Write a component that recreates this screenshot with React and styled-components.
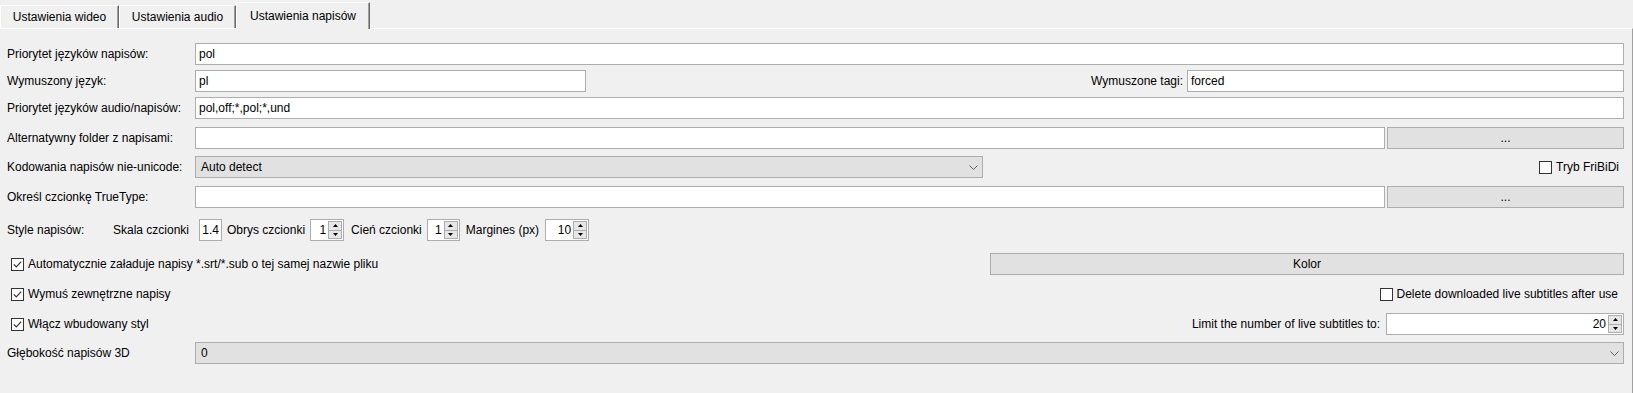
import React from 'react'
import styled, { createGlobalStyle } from 'styled-components'

const GlobalStyle = createGlobalStyle`
  html, body {
    margin: 0;
    padding: 0;
    background: #f0f0f0;
  }
  body {
    font-family: "Liberation Sans", Arial, sans-serif;
    font-size: 12px;
    color: #000;
  }
`

const Window = styled.div`
  width: 1633px;
  height: 393px;
  overflow: hidden;
`

const TabBar = styled.div`
  display: flex;
  align-items: flex-end;
  height: 28px;
`

const Tab = styled.div`
  position: relative;
  box-sizing: border-box;
  width: ${p => p.$w}px;
  height: ${p => (p.$active ? 27 : 23)}px;
  margin-bottom: ${p => (p.$active ? -1 : 0)}px;
  z-index: ${p => (p.$active ? 1 : 0)};
  display: flex;
  align-items: center;
  justify-content: center;
  background: #f0f0f0;
  border-top: 1px solid #fff;
  border-left: 1px solid #fff;
  border-right: 1px solid #696969;
  box-shadow: inset -1px 0 0 #a0a0a0;
  white-space: nowrap;
`

const Panel = styled.div`
  box-sizing: border-box;
  height: 365px;
  border-top: 1px solid #fff;
  border-right: 1px solid #a0a0a0;
  padding: 14px 8px 0 7px;
`

const Row = styled.div`
  display: flex;
  align-items: center;
  height: 22px;
  margin-top: ${p => p.$mt || 0}px;
`

const Label = styled.div`
  flex: none;
  white-space: nowrap;
  ${p => (p.$w ? `width: ${p.$w}px;` : '')}
  margin-left: ${p => p.$ml || 0}px;
  margin-right: ${p => p.$mr || 0}px;
`

const Spacer = styled.div`
  flex: 1;
`

const Field = styled.div`
  box-sizing: border-box;
  height: 22px;
  border: 1px solid #adadad;
  background: #fff;
  padding: 0 3px;
  display: flex;
  align-items: center;
  white-space: nowrap;
  ${p => (p.$w ? `width: ${p.$w}px; flex: none;` : 'flex: 1;')}
`

const Combo = styled(Field)`
  background: #e1e1e1;
  justify-content: space-between;
  padding: 0 4px 0 5px;
`

const Button = styled.div`
  box-sizing: border-box;
  height: 22px;
  border: 1px solid #adadad;
  background: #e1e1e1;
  display: flex;
  align-items: center;
  justify-content: center;
  margin-left: ${p => p.$ml || 0}px;
  ${p => (p.$w ? `width: ${p.$w}px; flex: none;` : 'flex: 1;')}
`

const NumBox = styled.div`
  box-sizing: border-box;
  width: ${p => p.$w}px;
  height: 22px;
  flex: none;
  margin-left: ${p => p.$ml || 0}px;
  border: 1px solid #adadad;
  background: #fff;
  display: flex;
  align-items: center;
  justify-content: flex-end;
  padding-right: 2px;
`

const SpinBox = styled.div`
  box-sizing: border-box;
  width: ${p => p.$w}px;
  height: 22px;
  flex: none;
  margin-left: ${p => p.$ml || 0}px;
  border: 1px solid #adadad;
  background: #fff;
  display: flex;
  align-items: stretch;
  padding: 1px;
`

const SpinValue = styled.div`
  flex: 1;
  display: flex;
  align-items: center;
  justify-content: flex-end;
  padding-right: 2px;
`

const Arrows = styled.div`
  width: 14px;
  display: flex;
  flex-direction: column;
`

const ArrowBtn = styled.div`
  flex: 1;
  box-sizing: border-box;
  background: #e6e6e6;
  border: 1px solid #adadad;
  margin-top: ${p => (p.$down ? -1 : 0)}px;
  display: flex;
  align-items: center;
  justify-content: center;
`

const CheckItem = styled.div`
  display: flex;
  align-items: center;
  gap: 3px;
  white-space: nowrap;
  margin-left: ${p => p.$ml || 0}px;
  margin-right: ${p => p.$mr || 0}px;
`

const Box = styled.div`
  box-sizing: border-box;
  width: 13px;
  height: 13px;
  border: 1px solid #333;
  background: #fff;
  display: flex;
  align-items: center;
  justify-content: center;
  margin-right: 1px;
`

function Chevron() {
  return (
    <svg width="9" height="5" viewBox="0 0 9 5">
      <polyline points="0.5,0.5 4.5,4.5 8.5,0.5" fill="none" stroke="#606060" strokeWidth="1" />
    </svg>
  )
}

function Check({ checked, children, ml, mr }) {
  return (
    <CheckItem $ml={ml} $mr={mr}>
      <Box>
        {checked && (
          <svg width="9" height="9" viewBox="0 0 9 9">
            <polyline points="0.8,4.3 3.3,6.9 8.2,1.6" fill="none" stroke="#333" strokeWidth="1.2" />
          </svg>
        )}
      </Box>
      {children}
    </CheckItem>
  )
}

function Spinner({ value, w, ml }) {
  return (
    <SpinBox $w={w} $ml={ml}>
      <SpinValue>{value}</SpinValue>
      <Arrows>
        <ArrowBtn>
          <svg width="5" height="3" viewBox="0 0 5 3"><polygon points="2.5,0 5,3 0,3" fill="#000" /></svg>
        </ArrowBtn>
        <ArrowBtn $down>
          <svg width="5" height="3" viewBox="0 0 5 3"><polygon points="0,0 5,0 2.5,3" fill="#000" /></svg>
        </ArrowBtn>
      </Arrows>
    </SpinBox>
  )
}

export default function App() {
  return (
    <Window>
      <GlobalStyle />
      <TabBar>
        <Tab $w={119}>Ustawienia wideo</Tab>
        <Tab $w={117}>Ustawienia audio</Tab>
        <Tab $w={134} $active>Ustawienia napisów</Tab>
      </TabBar>
      <Panel>
        <Row>
          <Label $w={188}>Priorytet języków napisów:</Label>
          <Field>pol</Field>
        </Row>
        <Row $mt={5}>
          <Label $w={188}>Wymuszony język:</Label>
          <Field $w={391}>pl</Field>
          <Spacer />
          <Label $mr={4}>Wymuszone tagi:</Label>
          <Field $w={437}>forced</Field>
        </Row>
        <Row $mt={5}>
          <Label $w={188}>Priorytet języków audio/napisów:</Label>
          <Field>pol,off;*,pol;*,und</Field>
        </Row>
        <Row $mt={8}>
          <Label $w={188}>Alternatywny folder z napisami:</Label>
          <Field />
          <Button $w={237} $ml={2}>...</Button>
        </Row>
        <Row $mt={7}>
          <Label $w={188}>Kodowania napisów nie-unicode:</Label>
          <Combo $w={788}>
            Auto detect
            <Chevron />
          </Combo>
          <Spacer />
          <Check mr={5}>Tryb FriBiDi</Check>
        </Row>
        <Row $mt={8}>
          <Label $w={188}>Określ czcionkę TrueType:</Label>
          <Field />
          <Button $w={237} $ml={2}>...</Button>
        </Row>
        <Row $mt={11}>
          <Label $w={106}>Style napisów:</Label>
          <Label>Skala czcionki</Label>
          <NumBox $w={23} $ml={10}>1.4</NumBox>
          <Label $ml={5}>Obrys czcionki</Label>
          <Spinner value="1" w={34} ml={5} />
          <Label $ml={7}>Cień czcionki</Label>
          <Spinner value="1" w={33} ml={5} />
          <Label $ml={6}>Margines (px)</Label>
          <Spinner value="10" w={44} ml={6} />
        </Row>
        <Row $mt={12}>
          <Check checked ml={4}>Automatycznie załaduje napisy *.srt/*.sub o tej samej nazwie pliku</Check>
          <Spacer />
          <Button $w={634}>Kolor</Button>
        </Row>
        <Row $mt={8}>
          <Check checked ml={4}>Wymuś zewnętrzne napisy</Check>
          <Spacer />
          <Check mr={6}>Delete downloaded live subtitles after use</Check>
        </Row>
        <Row $mt={8}>
          <Check checked ml={4}>Włącz wbudowany styl</Check>
          <Spacer />
          <Label $mr={6}>Limit the number of live subtitles to:</Label>
          <Spinner value="20" w={238} />
        </Row>
        <Row $mt={7}>
          <Label $w={188}>Głębokość napisów 3D</Label>
          <Combo>
            0
            <Chevron />
          </Combo>
        </Row>
      </Panel>
    </Window>
  )
}
